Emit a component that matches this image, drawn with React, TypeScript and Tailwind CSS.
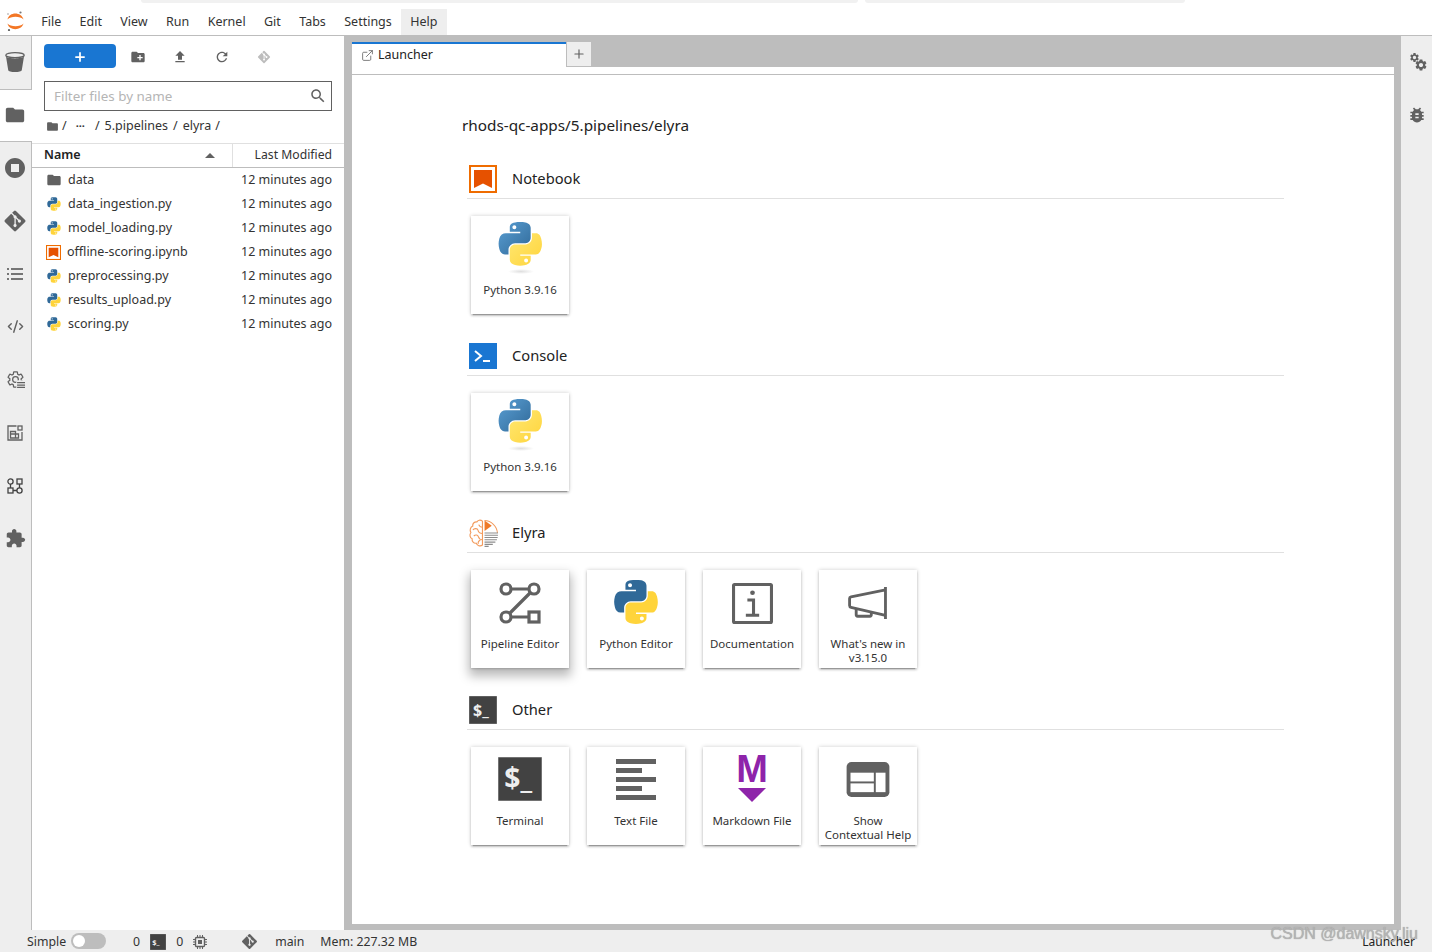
import { CodeXml, ExternalLink, Plus } from "lucide-react";
import { FaGitAlt } from "react-icons/fa";
import type { ReactNode } from "react";

const FONT = "font-['Noto_Sans',sans-serif]";

const FILES = [
  { name: "data", type: "folder" },
  { name: "data_ingestion.py", type: "py" },
  { name: "model_loading.py", type: "py" },
  { name: "offline-scoring.ipynb", type: "nb" },
  { name: "preprocessing.py", type: "py" },
  { name: "results_upload.py", type: "py" },
  { name: "scoring.py", type: "py" },
];

const MENU = ["File", "Edit", "View", "Run", "Kernel", "Git", "Tabs", "Settings"];

const PY_BLUE =
  "M 54.918785,9.1927421e-4 C 50.335132,0.02221727 45.957846,0.41313697 42.106285,1.0946693 30.760069,3.0991731 28.700036,7.2947714 28.700035,15.032169 v 10.21875 h 26.8125 v 3.40625 h -26.8125 -10.0625 c -7.792459,0 -14.6157588,4.683717 -16.7499998,13.59375 -2.46181998,10.212966 -2.57101508,16.586023 0,27.25 1.9059283,7.937852 6.4575432,13.593748 14.2499998,13.59375 h 9.21875 v -12.25 c 0,-8.849902 7.657144,-16.656248 16.75,-16.65625 h 26.78125 c 7.454951,0 13.406253,-6.138164 13.40625,-13.625 v -25.53125 c 0,-7.2663386 -6.12998,-12.7247771 -13.40625,-13.9374997 C 64.281548,0.32794397 59.502438,-0.02037903 54.918785,9.1927421e-4 Z m -14.5,8.21875012579 c 2.769547,0 5.03125,2.2986456 5.03125,5.1249996 -2e-6,2.816336 -2.261703,5.09375 -5.03125,5.09375 -2.779476,-1e-6 -5.03125,-2.277415 -5.03125,-5.09375 -10e-7,-2.826353 2.251774,-5.1249996 5.03125,-5.1249996 z";
const PY_YELLOW =
  "m 85.637535,28.657169 v 11.90625 c 0,9.230755 -7.825895,16.999999 -16.75,17 h -26.78125 c -7.335833,0 -13.406249,6.278483 -13.40625,13.625 v 25.531247 c 0,7.266344 6.318588,11.540324 13.40625,13.625004 8.487331,2.49561 16.626237,2.94663 26.78125,0 6.750155,-1.95439 13.406253,-5.88761 13.40625,-13.625004 V 86.500919 h -26.78125 v -3.40625 h 26.78125 13.406254 c 7.792461,0 10.696251,-5.435408 13.406241,-13.59375 2.79933,-8.398886 2.74022,-16.475776 0,-27.25 -1.92578,-7.757441 -5.60387,-13.59375 -13.406241,-13.59375 z m -15.0625,64.65625 c 2.779478,3e-6 5.03125,2.277417 5.03125,5.093747 -2e-6,2.826354 -2.251775,5.125004 -5.03125,5.125004 -2.76955,0 -5.03125,-2.29865 -5.03125,-5.125004 2e-6,-2.81633 2.261697,-5.093747 5.03125,-5.093747 z";

const P_FOLDER = "M10 4H4c-1.1 0-1.99.9-1.99 2L2 18c0 1.1.9 2 2 2h16c1.1 0 2-.9 2-2V8c0-1.1-.9-2-2-2h-8l-2-2z";
const P_GEAR =
  "M19.14 12.94c.04-.3.06-.61.06-.94 0-.32-.02-.64-.07-.94l2.03-1.58c.18-.14.23-.41.12-.61l-1.92-3.32c-.12-.22-.37-.29-.59-.22l-2.39.96c-.5-.38-1.03-.7-1.62-.94l-.36-2.54c-.04-.24-.24-.41-.48-.41h-3.84c-.24 0-.43.17-.47.41l-.36 2.54c-.59.24-1.13.57-1.62.94l-2.39-.96c-.22-.08-.47 0-.59.22L2.74 8.87c-.12.21-.08.47.12.61l2.03 1.58c-.05.3-.09.63-.09.94s.02.64.07.94l-2.03 1.58c-.18.14-.23.41-.12.61l1.92 3.32c.12.22.37.29.59.22l2.39-.96c.5.38 1.03.7 1.62.94l.36 2.54c.05.24.24.41.48.41h3.84c.24 0 .44-.17.47-.41l.36-2.54c.59-.24 1.13-.56 1.62-.94l2.39.96c.22.08.47 0 .59-.22l1.92-3.32c.12-.22.07-.47-.12-.61l-2.01-1.58zM12 15.6c-1.98 0-3.6-1.62-3.6-3.6s1.62-3.6 3.6-3.6 3.6 1.62 3.6 3.6-1.62 3.6-3.6 3.6z";

function Mat({ d, size = 16, color = "#616161" }: { d: string; size?: number; color?: string }) {
  return (
    <svg width={size} height={size} viewBox="0 0 24 24" fill={color} className="block shrink-0">
      <path d={d} />
    </svg>
  );
}

function PythonIcon({ size = 16 }: { size?: number }) {
  return (
    <svg width={size} height={size} viewBox="-10 -10 131.16 132.39" className="block shrink-0">
      <path fill="#306998" d={PY_BLUE} />
      <path fill="#ffd43b" d={PY_YELLOW} />
    </svg>
  );
}

// カーネル用のグラデーション付きロゴ
function KernelLogo() {
  return (
    <svg width="52" height="52" viewBox="0 0 52 52" className="block">
      <defs>
        <linearGradient id="pyb" x1="0" y1="0" x2="1" y2="1">
          <stop offset="0" stopColor="#5a9fd4" />
          <stop offset="1" stopColor="#306998" />
        </linearGradient>
        <linearGradient id="pyy" x1="0" y1="0" x2="1" y2="1">
          <stop offset="0" stopColor="#ffe873" />
          <stop offset="1" stopColor="#ffd43b" />
        </linearGradient>
        <radialGradient id="pys">
          <stop offset="0" stopColor="#b8b8b8" stopOpacity="0.45" />
          <stop offset="1" stopColor="#b8b8b8" stopOpacity="0" />
        </radialGradient>
      </defs>
      <g transform="translate(4.6 0) scale(0.39)">
        <path fill="url(#pyb)" d={PY_BLUE} />
        <path fill="url(#pyy)" d={PY_YELLOW} />
      </g>
      <ellipse cx="27" cy="49.5" rx="13" ry="2.5" fill="url(#pys)" />
    </svg>
  );
}

function NotebookIcon({ size = 28 }: { size?: number }) {
  return (
    <svg width={size} height={size} viewBox="0 0 28 28" className="block shrink-0">
      <rect x="1" y="1" width="26" height="26" fill="#fff" stroke="#ef6c00" strokeWidth="2" />
      <path d="M5 5h18v18l-9-4.5L5 23z" fill="#e65100" />
    </svg>
  );
}

function TerminalIcon({ size = 28, fs = 16 }: { size?: number; fs?: number }) {
  return (
    <svg width={size} height={size} viewBox="0 0 28 28" className="block shrink-0">
      <rect width="28" height="28" fill="#424242" stroke="#bdbdbd" strokeWidth="0.5" />
      <text x="4" y="20" fontSize={fs} fontWeight="700" fontFamily="'Noto Sans',sans-serif" fill="#eee">
        $_
      </text>
    </svg>
  );
}

function ElyraIcon() {
  return (
    <svg width="31" height="29" viewBox="0 0 30 28" fill="none" className="block shrink-0 -ml-[1px]">
      <g stroke="#f29a5c" strokeWidth="1.1">
        <path d="M14 2c-2-1.6-4.6-1-5.4.8C6 2.6 4.2 4.4 4.6 6.8 2.2 8 1.4 10.8 2.8 13 1.2 15.2 1.8 18 4 19.2c-.4 2.6 1.6 4.6 4 4.2 .6 2.4 3.8 3.4 6 1.8z" />
        <path d="M14 8c-2 0-3-1-3.6-2.6M14 14c-2.4 0-4-1.4-4.4-3.4S5.6 9 4.8 10.6M14 20c-2 0-3.4-1-4-3s-3-2-4.400-.6M10 24c-.6-1.6.4-3 2-3.400" />
      </g>
      <path d="M16 1.500l7 5-7 5z" fill="#ef7a28" />
      <path d="M16 1.500A13 13 0 0 1 28.500 13.500" stroke="#f29a5c" strokeWidth="1" />
      <g stroke="#8d8d8d" strokeWidth="1.100">
        <path d="M16 13.500h13M16 15.700h13M16 17.900h12.700M16 20.100h12M16 22.300h10.500M16 24.500h8M16 26.500h4" />
      </g>
    </svg>
  );
}

function JupyterLogo() {
  return (
    <svg width="20" height="24" viewBox="0 0 20 24" className="block">
      <path d="M1.500 12.500C3 4.500 15.500 4.500 17.500 12.500 14.500 8.800 4.500 8.800 1.500 12.500z" fill="#f37726" />
      <path d="M1.500 16.500C3 24 15.500 24 17.500 16.500 14.500 20 4.500 20 1.500 16.500z" fill="#f37726" />
      <circle cx="14.500" cy="5.500" r="1.100" fill="#767677" />
      <circle cx="2" cy="7" r="0.800" fill="#989798" />
      <circle cx="3" cy="23" r="1.100" fill="#616262" />
    </svg>
  );
}

function TrashIcon() {
  return (
    <svg width="20" height="20" viewBox="0 0 20 20" className="block" fill="#616161">
      <ellipse cx="10" cy="3.200" rx="9.200" ry="2.500" fill="none" stroke="#616161" strokeWidth="1.300" />
      <path d="M1 4.500c2 2.500 16 2.500 18 0l-2.200 13.500c-.2 1.400-3.200 2-6.800 2s-6.600-.6-6.800-2z" />
    </svg>
  );
}

function TocIcon() {
  return (
    <svg width="16" height="14" viewBox="0 0 16 14" className="block" fill="#757575">
      <rect x="0" y="1" width="2" height="2" />
      <rect x="4" y="1" width="12" height="2" />
      <rect x="0" y="6" width="2" height="2" />
      <rect x="4" y="6" width="12" height="2" />
      <rect x="0" y="11" width="2" height="2" />
      <rect x="4" y="11" width="12" height="2" />
    </svg>
  );
}

function PropertyIcon() {
  return (
    <svg width="19" height="19" viewBox="0 0 24 24" className="block">
      <path d={P_GEAR} fill="none" stroke="#616161" strokeWidth="1.6" />
      <rect x="13" y="13" width="11" height="11" fill="#eeeeee" />
      <path d="M14 16h10M14 19h10M14 22h10" stroke="#616161" strokeWidth="1.600" />
    </svg>
  );
}

function BuildIcon() {
  return (
    <svg width="16" height="16" viewBox="0 0 16 16" fill="none" stroke="#616161" strokeWidth="1.300" className="block">
      <path d="M9.500 1H1v14h14V7" />
      <rect x="11" y="1" width="4" height="4" />
      <path d="M3.500 6.500h5v2.500h3v4h-8zM3.500 9h5v4" />
    </svg>
  );
}

function GraphIcon() {
  return (
    <svg width="16" height="16" viewBox="0 0 16 16" fill="none" stroke="#424242" strokeWidth="1.300" className="block">
      <circle cx="3.500" cy="3.500" r="2.600" />
      <rect x="10" y="1" width="5" height="5" />
      <rect x="1" y="10" width="5" height="5" />
      <circle cx="12.500" cy="12.500" r="2.600" />
      <path d="M3.500 6v4M12.500 6v4M6 12.500h4" />
    </svg>
  );
}

function PipelineIcon() {
  return (
    <svg width="42" height="42" viewBox="0 0 42 42" fill="none" stroke="#616161" strokeWidth="3.200" className="block">
      <circle cx="7" cy="7" r="5" />
      <circle cx="35" cy="7" r="5" />
      <circle cx="7" cy="35" r="5" />
      <rect x="30" y="30" width="10" height="10" />
      <path d="M12 7h18M31.500 10.500 10.500 31.500M12 35h18" />
    </svg>
  );
}

function InfoIcon() {
  return (
    <svg width="41" height="41" viewBox="0 0 40 40" className="block" fill="none">
      <rect x="1.500" y="1.500" width="37" height="37" rx="1" stroke="#616161" strokeWidth="3" />
      <circle cx="20" cy="9.500" r="2.300" fill="#616161" />
      <path d="M15 16.500h6v15M13.500 31.500h13" stroke="#616161" strokeWidth="3" />
    </svg>
  );
}

function MegaphoneIcon() {
  return (
    <svg width="40" height="34" viewBox="0 0 42 36" fill="none" stroke="#616161" strokeWidth="3" className="block">
      <path d="M39.500 0v34M39.500 3 3 10.500c-1 .2-1.500.8-1.500 1.800v7.400c0 1 .5 1.600 1.500 1.800L39.500 30" />
      <path d="M8.500 23v6.500c0 1 .5 1.500 1.500 1.500h13c1 0 1.500-.5 1.500-1.500V26" />
    </svg>
  );
}

function TextFileIcon() {
  const widths = ["w-[40px]", "w-[26px]", "w-[40px]", "w-[26px]", "w-[40px]"];
  return (
    <div className="flex flex-col gap-[4px] w-[40px]">
      {widths.map((w, i) => (
        <div key={i} className={`h-[5px] bg-[#616161] ${w}`} />
      ))}
    </div>
  );
}

function MarkdownIcon() {
  return (
    <svg width="36" height="62" viewBox="-2 -7 36 62" className="block">
      <text x="16" y="27" textAnchor="middle" fontSize="38" fontWeight="700" fontFamily="'Liberation Sans',sans-serif" fill="#8e24aa">
        M
      </text>
      <path d="M2 33h28L16 47z" fill="#8e24aa" />
    </svg>
  );
}

function HelpIcon() {
  return (
    <svg width="44" height="35" viewBox="0 0 44 36" className="block">
      <rect width="44" height="36" rx="5" fill="#616161" />
      <rect x="4" y="11" width="24" height="9" fill="#fff" />
      <rect x="4" y="22" width="24" height="9" fill="#fff" />
      <rect x="30" y="11" width="10" height="20" fill="#fff" />
    </svg>
  );
}

function ChipIcon() {
  return (
    <svg width="14" height="14" viewBox="0 0 14 14" fill="none" stroke="#616161" className="block">
      <rect x="2.500" y="2.500" width="9" height="9" rx="1" strokeWidth="1.400" />
      <rect x="5" y="5" width="4" height="4" fill="#616161" stroke="none" />
      <path d="M4.500 0v2M7 0v2M9.500 0v2M4.500 12v2M7 12v2M9.500 12v2M0 4.500h2M0 7h2M0 9.500h2M12 4.500h2M12 7h2M12 9.500h2" />
    </svg>
  );
}

function RailItem({ children, active }: { children: ReactNode; active?: boolean }) {
  return (
    <div
      className={
        active
          ? "h-[53px] -mr-px pr-[2px] pb-[2px] bg-white border-y border-[#bdbdbd] flex items-center justify-center relative"
          : "h-[53px] pr-[1px] pb-[2px] flex items-center justify-center"
      }
    >
      {children}
    </div>
  );
}

function Card({ label, icon, hover }: { label: ReactNode; icon: ReactNode; hover?: boolean }) {
  return (
    <div
      className={`w-[98px] h-[98px] bg-white flex flex-col items-center pt-[6px] ${
        hover
          ? "shadow-[0_6px_10px_2px_rgba(0,0,0,0.28),0_1px_2px_rgba(0,0,0,0.2)]"
          : "shadow-[0_2px_2px_0_rgba(0,0,0,0.16),0_3px_1px_-2px_rgba(0,0,0,0.24),0_0_4px_0_rgba(0,0,0,0.2)]"
      }`}
    >
      <div className="h-[52px] w-full flex items-center justify-center">{icon}</div>
      <div className="mt-[9px] text-[11.500px] leading-[14px] text-center text-[#333] whitespace-nowrap">{label}</div>
    </div>
  );
}

function Section({ title, icon, children }: { title: string; icon: ReactNode; children: ReactNode }) {
  return (
    <section className="mb-[24px]">
      <div className="h-[38px] border-b border-[#e0e0e0] flex items-center pl-[2px] pb-[1px]">
        <div className="w-[30px] flex items-center">{icon}</div>
        <h2 className="ml-[13px] -mt-[2px] text-[14.700px] text-[#222] font-normal">{title}</h2>
      </div>
      <div className="mt-[17px] ml-[4px] flex gap-[18px]">{children}</div>
    </section>
  );
}

export default function App() {
  return (
    <div className={`relative h-screen w-full overflow-hidden flex flex-col bg-white text-[#333] ${FONT}`}>
      {/* 上端のブラウザタブの名残 */}
      <div className="h-[3px] flex shrink-0">
        <div className="ml-[141px] w-[717px] bg-[#f1f1f1] rounded-b" />
        <div className="ml-[7px] w-[320px] bg-[#f1f1f1] rounded-b" />
      </div>

      {/* メニューバー */}
      <header className="h-[33px] shrink-0 flex items-stretch border-b border-[#bdbdbd]">
        <div className="w-[32px] flex items-center justify-center">
          <JupyterLogo />
        </div>
        <nav className="flex text-[12.500px] pt-[6px]">
          {MENU.map((m) => (
            <div key={m} className="px-[9.200px] h-[26px] pt-[1px] flex items-center">
              {m}
            </div>
          ))}
          <div className="px-[9.200px] h-[26px] pt-[1px] flex items-center bg-[#eeeeee]">Help</div>
        </nav>
      </header>

      <div className="flex-1 min-h-0 flex">
        {/* 左レール */}
        <aside className="w-[32px] shrink-0 bg-[#eeeeee] border-r border-[#bdbdbd] flex flex-col">
          <RailItem>
            <TrashIcon />
          </RailItem>
          <RailItem active>
            <Mat d={P_FOLDER} size={22} />
          </RailItem>
          <RailItem>
            <Mat size={24} d="M12 2C6.48 2 2 6.48 2 12s4.48 10 10 10 10-4.48 10-10S17.52 2 12 2zm4 14H8V8h8v8z" />
          </RailItem>
          <RailItem>
            <FaGitAlt size={24} color="#616161" />
          </RailItem>
          <RailItem>
            <TocIcon />
          </RailItem>
          <RailItem>
            <CodeXml size={17} color="#616161" strokeWidth={2} />
          </RailItem>
          <RailItem>
            <PropertyIcon />
          </RailItem>
          <RailItem>
            <BuildIcon />
          </RailItem>
          <RailItem>
            <GraphIcon />
          </RailItem>
          <RailItem>
            <Mat size={21} d="M20.5 11H19V7c0-1.1-.9-2-2-2h-4V3.5C13 2.12 11.88 1 10.5 1S8 2.12 8 3.5V5H4c-1.1 0-1.99.9-1.99 2v3.8H3.5c1.49 0 2.7 1.21 2.7 2.7s-1.21 2.7-2.7 2.7H2V20c0 1.1.9 2 2 2h3.8v-1.5c0-1.49 1.21-2.7 2.7-2.7 1.49 0 2.7 1.21 2.7 2.7V22H17c1.1 0 2-.9 2-2v-4h1.5c1.38 0 2.5-1.12 2.5-2.5S21.88 11 20.5 11z" />
          </RailItem>
        </aside>

        {/* ファイルブラウザ */}
        <aside className="w-[312px] shrink-0 bg-white flex flex-col text-[12.500px]">
          <div className="flex items-center h-[24px] mt-[8px] ml-[12px]">
            <div className="w-[72px] h-[24px] bg-[#1976d2] rounded-sm flex items-center justify-center pt-[1px]">
              <Plus size={14} color="#fff" strokeWidth={3} />
            </div>
            <div className="ml-[14px] mt-[2px] flex items-center gap-[26px]">
              <Mat size={16} d="M20 6h-8l-2-2H4c-1.11 0-1.99.89-1.99 2L2 18c0 1.11.89 2 2 2h16c1.11 0 2-.89 2-2V8c0-1.11-.89-2-2-2zm-1 8h-3v3h-2v-3h-3v-2h3V9h2v3h3v2z" />
              <Mat size={16} d="M9 16h6v-6h4l-7-7-7 7h4zm-4 2h14v2H5z" />
              <Mat size={16} d="M17.65 6.35C16.2 4.9 14.21 4 12 4c-4.42 0-7.99 3.58-7.99 8s3.57 8 7.99 8c3.73 0 6.84-2.55 7.73-6h-2.08c-.82 2.33-3.04 4-5.65 4-3.31 0-6-2.69-6-6s2.69-6 6-6c1.66 0 3.14.69 4.22 1.78L13 11h7V4l-2.35 2.35z" />
              <FaGitAlt size={14} color="#bdbdbd" className="ml-px" />
            </div>
          </div>

          <div className="mt-[13px] mx-[12px] h-[30px] border border-[#616161] flex items-center justify-between pl-[9px] pr-[4px]">
            <span className="text-[13.400px] pt-[1px] text-[#b5b5b5]">Filter files by name</span>
            <Mat size={18} color="#616161" d="M15.5 14h-.79l-.28-.27C15.41 12.59 16 11.11 16 9.5 16 5.91 13.09 3 9.5 3S3 5.91 3 9.5 5.91 16 9.5 16c1.61 0 3.09-.59 4.23-1.57l.27.28v.79l5 4.99L20.49 19l-4.99-5zm-6 0C7.01 14 5 11.99 5 9.5S7.01 5 9.5 5 14 7.01 14 9.5 11.99 14 9.5 14z" />
          </div>

          <div className="h-[32px] ml-[14px] pb-[2px] flex items-center text-[12.500px] whitespace-pre">
            <Mat d={P_FOLDER} size={13} />
            <span className="ml-[3px]">/</span>
            <span className="ml-[9px] text-[11px] font-bold">···</span>
            <span className="ml-[10px]">/</span>
            <span className="ml-[5px]">5.pipelines</span>
            <span className="ml-[5px]">/</span>
            <span className="ml-[5px]">elyra</span>
            <span className="ml-[4px]">/</span>
          </div>

          <div className="h-[25px] border-y border-t-[#e0e0e0] border-b-[#bdbdbd] flex items-stretch">
            <div className="w-[201px] border-r border-[#e0e0e0] flex items-center justify-between pl-[12px] pr-[17px]">
              <span className="font-semibold text-[#222]">Name</span>
              <span className="w-0 h-0 border-x-[5px] border-x-transparent border-b-[5px] border-b-[#616161]" />
            </div>
            <div className="flex-1 flex items-center justify-end pr-[12px] text-[12.200px]">Last Modified</div>
          </div>

          <ul>
            {FILES.map((f) => (
              <li key={f.name} className="h-[24px] flex items-center pl-[14px] pr-[12px]">
                {f.type === "folder" && <Mat d={P_FOLDER} size={16} />}
                {f.type === "py" && <PythonIcon />}
                {f.type === "nb" && <NotebookIcon size={15} />}
                <span className="ml-[6px] flex-1">{f.name}</span>
                <span>12 minutes ago</span>
              </li>
            ))}
          </ul>
        </aside>

        {/* メインエリア */}
        <main className="flex-1 min-w-0 bg-[#bdbdbd] pl-[8px] pr-[7px] pb-[6px] flex flex-col">
          <div className="h-[31px] pt-[6px] flex shrink-0 items-start">
            <div className="w-[214px] h-[25px] bg-white border-t-2 border-[#1976d2] flex items-center pl-[9px] text-[12.500px]">
              <ExternalLink size={13} color="#616161" strokeWidth={1.5} />
              <span className="ml-[4px] text-[#222]">Launcher</span>
            </div>
            <div className="ml-px w-[24px] h-[24px] bg-[#eeeeee] flex items-center justify-center">
              <Plus size={14} color="#616161" strokeWidth={2} />
            </div>
          </div>
          <div className="h-[8px] bg-white border-b border-[#bdbdbd] shrink-0" />
          <div className="flex-1 min-h-0 bg-white pl-[115px]">
            <div className="-ml-[5px] mt-[40px] h-[20px] text-[15.300px] leading-[20px] text-[#222]">
              rhods-qc-apps/5.pipelines/elyra
            </div>
            <div className="mt-[26px] w-[817px]">
              <Section title="Notebook" icon={<NotebookIcon />}>
                <Card label="Python 3.9.16" icon={<KernelLogo />} />
              </Section>
              <Section
                title="Console"
                icon={
                  <svg width="28" height="26" viewBox="0 0 28 26" className="block">
                    <rect width="28" height="26" fill="#1976d2" />
                    <path d="M6 8l6 5-6 5" fill="none" stroke="#fff" strokeWidth="2" />
                    <path d="M14 18h7" stroke="#fff" strokeWidth="2" />
                  </svg>
                }
              >
                <Card label="Python 3.9.16" icon={<KernelLogo />} />
              </Section>
              <Section title="Elyra" icon={<ElyraIcon />}>
                <Card label="Pipeline Editor" icon={<div className="pt-[2px]"><PipelineIcon /></div>} hover />
                <Card label="Python Editor" icon={<PythonIcon size={52} />} />
                <Card label="Documentation" icon={<div className="pt-[2px]"><InfoIcon /></div>} />
                <Card
                  label={
                    <>
                      What&apos;s new in
                      <br />
                      v3.15.0
                    </>
                  }
                  icon={<div className="pt-[4px]"><MegaphoneIcon /></div>}
                />
              </Section>
              <Section title="Other" icon={<TerminalIcon />}>
                <Card label="Terminal" icon={<TerminalIcon size={44} fs={18} />} />
                <Card label="Text File" icon={<TextFileIcon />} />
                <Card label="Markdown File" icon={<MarkdownIcon />} />
                <Card
                  label={
                    <>
                      Show
                      <br />
                      Contextual Help
                    </>
                  }
                  icon={<div className="pt-[1px]"><HelpIcon /></div>}
                />
              </Section>
            </div>
          </div>
        </main>

        {/* 右レール */}
        <aside className="w-[31px] shrink-0 bg-[#eeeeee] flex flex-col items-center">
          <div className="h-[53px] relative w-full">
            <div className="absolute left-[8px] top-[16px]">
              <Mat d={P_GEAR} size={11} />
            </div>
            <div className="absolute left-[13px] top-[22px]">
              <Mat d={P_GEAR} size={14} />
            </div>
          </div>
          <div className="h-[53px] pb-[2px] flex items-center justify-center">
            <Mat size={20} d="M20 8h-2.81c-.45-.78-1.07-1.45-1.82-1.96L17 4.41 15.59 3l-2.17 2.17C12.96 5.06 12.49 5 12 5c-.49 0-.96.06-1.41.17L8.41 3 7 4.41l1.62 1.63C7.88 6.55 7.26 7.22 6.81 8H4v2h2.09c-.05.33-.09.66-.09 1v1H4v2h2v1c0 .34.04.67.09 1H4v2h2.81c1.04 1.79 2.97 3 5.19 3s4.15-1.21 5.19-3H20v-2h-2.09c.05-.33.09-.66.09-1v-1h2v-2h-2v-1c0-.34-.04-.67-.09-1H20V8zm-6 8h-4v-2h4v2zm0-4h-4v-2h4v2z" />
          </div>
        </aside>
      </div>

      {/* ステータスバー */}
      <footer className="h-[22px] shrink-0 bg-[#eeeeee] flex items-center pt-[2px] text-[12.300px] pl-[27px] pr-[17px]">
        <span>Simple</span>
        <div className="ml-[5px] -mt-[2px] w-[35px] h-[16px] rounded-full bg-[#bdbdbd] flex items-center pl-[2px]">
          <div className="w-[12px] h-[12px] rounded-full bg-white" />
        </div>
        <span className="ml-[27px]">0</span>
        <div className="ml-[10px]">
          <TerminalIcon size={16} fs={13} />
        </div>
        <span className="ml-[10px]">0</span>
        <div className="ml-[10px] -mt-[1px]">
          <ChipIcon />
        </div>
        <div className="ml-[34px] -mt-[2px]">
          <FaGitAlt size={17} color="#616161" />
        </div>
        <span className="ml-[17px]">main</span>
        <span className="ml-[16px]">Mem: 227.32 MB</span>
        <span className="ml-auto text-[12px] text-[#222]">Launcher</span>
      </footer>

      {/* 透かし */}
      <div className="absolute right-[14px] top-[924px] font-['Liberation_Sans',sans-serif] text-[16px] leading-[20px] text-[#b4b4b4] [text-shadow:0_0_1px_#999] pointer-events-none">
        CSDN @dawnsky.liu
      </div>
    </div>
  );
}
